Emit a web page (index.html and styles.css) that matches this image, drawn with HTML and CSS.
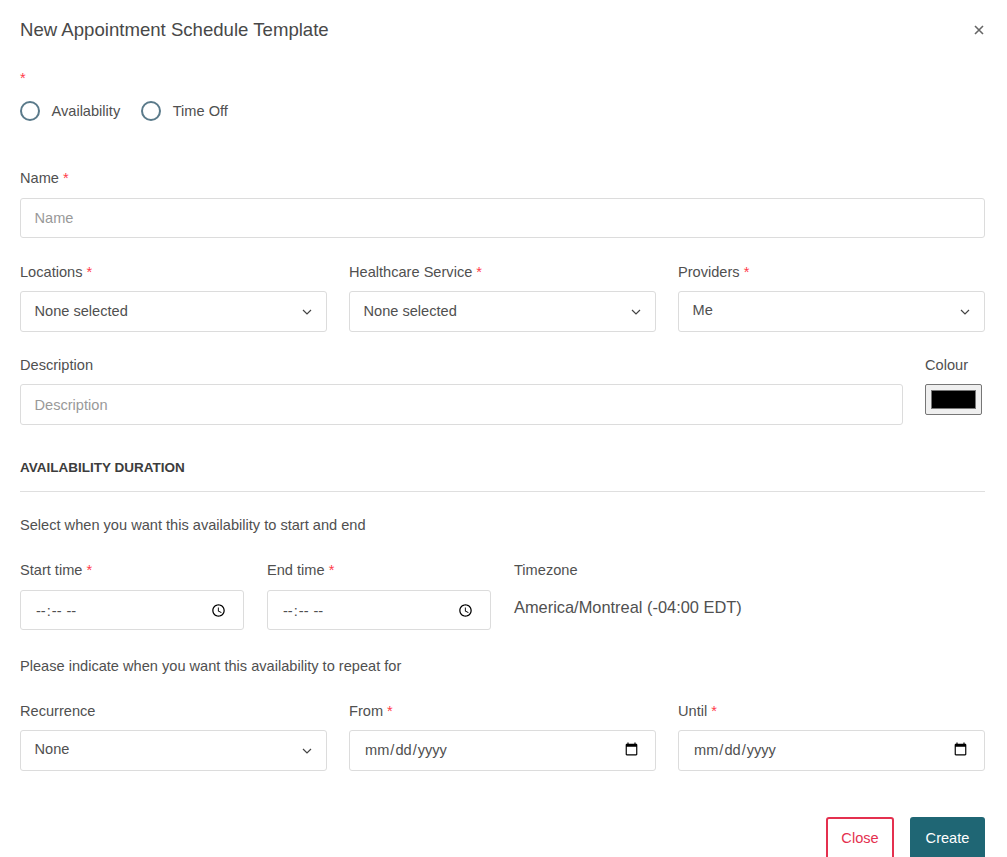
FILE: index.html
```html
<!DOCTYPE html>
<html lang="en">
<head>
<meta charset="utf-8">
<title>New Appointment Schedule Template</title>
<link rel="stylesheet" href="styles.css">
</head>
<body>
<form class="modal">
  <header class="modal-header">
    <h1 class="modal-title">New Appointment Schedule Template</h1>
    <button type="button" class="modal-x" aria-label="Close">
      <svg width="10" height="10" viewBox="0 0 10 10"><path d="M1 1l8 8M9 1l-8 8" stroke="#666" stroke-width="1.6" fill="none"/></svg>
    </button>
  </header>

  <div class="req-only"><span class="req">*</span></div>
  <div class="radios">
    <label class="radio"><span class="radio-dot"></span>Availability</label>
    <label class="radio"><span class="radio-dot"></span>Time Off</label>
  </div>

  <div class="field name-field">
    <label class="label">Name <span class="req">*</span></label>
    <input class="control" type="text" placeholder="Name">
  </div>

  <div class="row row-three row-providers">
    <div class="field">
      <label class="label">Locations <span class="req">*</span></label>
      <div class="select-wrap"><select class="control select select-low"><option>None selected</option></select><svg class="chev" width="10" height="6" viewBox="0 0 10 6"><path d="M1 1l4 4 4-4" stroke="#444" stroke-width="1.2" fill="none"/></svg></div>
    </div>
    <div class="field">
      <label class="label">Healthcare Service <span class="req">*</span></label>
      <div class="select-wrap"><select class="control select select-low"><option>None selected</option></select><svg class="chev" width="10" height="6" viewBox="0 0 10 6"><path d="M1 1l4 4 4-4" stroke="#444" stroke-width="1.2" fill="none"/></svg></div>
    </div>
    <div class="field">
      <label class="label">Providers <span class="req">*</span></label>
      <div class="select-wrap"><select class="control select"><option>Me</option></select><svg class="chev" width="10" height="6" viewBox="0 0 10 6"><path d="M1 1l4 4 4-4" stroke="#444" stroke-width="1.2" fill="none"/></svg></div>
    </div>
  </div>

  <div class="row row-desc">
    <div class="field desc">
      <label class="label">Description</label>
      <input class="control control-tall" type="text" placeholder="Description">
    </div>
    <div class="field colour">
      <label class="label">Colour</label>
      <input class="colour-input" type="color" value="#000000">
    </div>
  </div>

  <h2 class="section-title">AVAILABILITY DURATION</h2>
  <hr class="divider">
  <p class="hint hint-first">Select when you want this availability to start and end</p>

  <div class="row row-time">
    <div class="field">
      <label class="label">Start time <span class="req">*</span></label>
      <input class="control" type="time">
    </div>
    <div class="field">
      <label class="label">End time <span class="req">*</span></label>
      <input class="control" type="time">
    </div>
    <div class="field">
      <label class="label">Timezone</label>
      <div class="tz">America/Montreal (-04:00 EDT)</div>
    </div>
  </div>

  <p class="hint hint-second">Please indicate when you want this availability to repeat for</p>

  <div class="row row-three row-recur">
    <div class="field">
      <label class="label">Recurrence</label>
      <div class="select-wrap"><select class="control select"><option>None</option></select><svg class="chev" width="10" height="6" viewBox="0 0 10 6"><path d="M1 1l4 4 4-4" stroke="#444" stroke-width="1.2" fill="none"/></svg></div>
    </div>
    <div class="field">
      <label class="label">From <span class="req">*</span></label>
      <input class="control control-tall" type="date">
    </div>
    <div class="field">
      <label class="label">Until <span class="req">*</span></label>
      <input class="control control-tall" type="date">
    </div>
  </div>

  <footer class="actions">
    <button type="button" class="btn btn-close">Close</button>
    <button type="button" class="btn btn-create">Create</button>
  </footer>
</form>
</body>
</html>
```
FILE: styles.css
```css
* { box-sizing: border-box; }
html, body { margin: 0; height: 857px; overflow: hidden; background: #fff; }
body { font-family: "Liberation Sans", Arial, sans-serif; font-size: 14.6px; line-height: 20px; color: #505050; }
.modal { padding: 0 22px 0 20px; }
.modal-header { display: flex; justify-content: space-between; align-items: center; height: 60px; }
.modal-title { margin: 0; font-size: 18.6px; font-weight: 400; line-height: 24px; color: #484848; }
.modal-x { border: 0; background: none; padding: 0; margin-right: 1px; display: flex; }
.req { color: #ff3b4b; }
.req-only { height: 20px; margin-top: 8px; line-height: 20px; }
.radios { display: flex; gap: 21px; margin-top: 13px; height: 20px; }
.radio { display: flex; align-items: center; gap: 11.5px; }
.radio-dot { width: 20px; height: 20px; border: 2px solid #5a7a8a; border-radius: 50%; }
.field { display: flex; flex-direction: column; min-width: 0; }
.label { height: 20px; line-height: 20px; margin-bottom: 9px; }
.name-field { margin-top: 47px; }
.name-field .label { margin-bottom: 10px; }
.control { width: 100%; height: 40px; border: 1px solid #dcdcdc; border-radius: 3px; padding: 0 13.5px; background: #fff; font: inherit; color: #505050; outline: 0; }
.control::placeholder { color: #999; opacity: 1; }
.control-tall { height: 41px; }
.row { display: grid; column-gap: 22px; }
.row-three { grid-template-columns: repeat(3, 1fr); }
.row-providers { margin-top: 24px; }
.select-wrap { position: relative; }
.select { height: 41px; appearance: none; -webkit-appearance: none; padding-bottom: 3px; }
.select-low { padding-bottom: 1px; }
input[type="date"] { padding: 0 14px 2px; }
input[type="time"] { padding: 2px 14px 0; }
.chev { position: absolute; right: 15px; top: 18px; pointer-events: none; }
.row-desc { grid-template-columns: 1fr 60px; margin-top: 23px; }
.colour-input { width: 57px; height: 31px; padding: 1px 3px; border: 1px solid #767676; border-radius: 2px; background: #efefef; display: block; }
.section-title { margin: 33px 0 0; font-size: 13.5px; font-weight: 700; line-height: 20px; color: #3c3c3c; }
.divider { border: 0; border-top: 1px solid #dfdfdf; margin: 13px 0 0; }
.hint { margin: 0; line-height: 20px; }
.hint-first { margin-top: 23px; }
.row-time { grid-template-columns: 224px 224px 1fr; column-gap: 23px; margin-top: 25px; }
.row-time .label { margin-bottom: 10px; }
.tz { font-size: 16.4px; line-height: 35px; }
.hint-second { margin-top: 26px; }
.row-recur { margin-top: 25px; }
.actions { display: flex; justify-content: flex-end; gap: 16px; margin-top: 46px; }
.btn { height: 44px; border-radius: 3px; font: inherit; font-size: 14.6px; padding: 0 0 2px; }
.btn-close { width: 68px; border: 2px solid #e4304f; background: #fff; color: #e4304f; }
.btn-create { width: 75px; border: 0; background: #1f6674; color: #fff; }
```
